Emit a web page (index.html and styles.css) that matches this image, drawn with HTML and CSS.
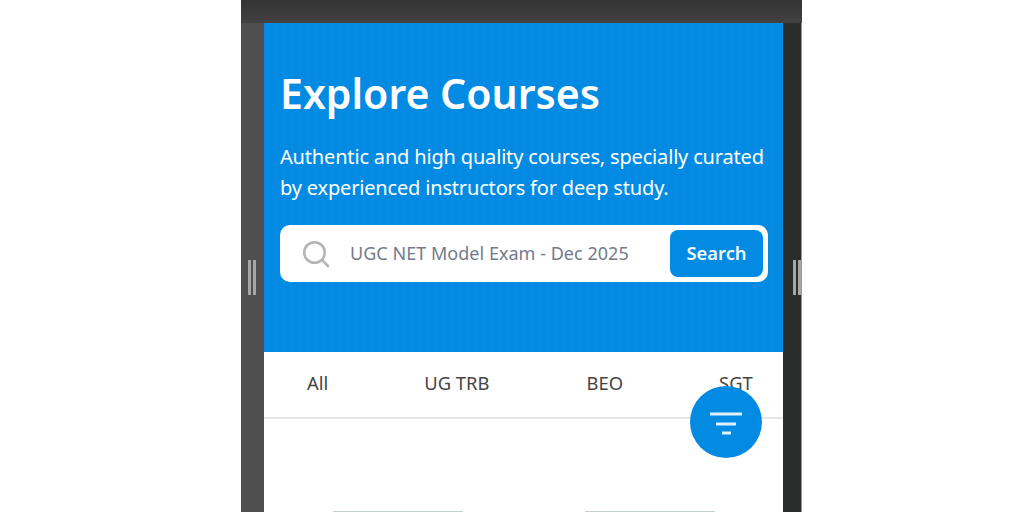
FILE: index.html
```html
<!DOCTYPE html>
<html lang="en">
<head>
  <meta charset="UTF-8">
  <meta name="viewport" content="width=device-width, initial-scale=1.0">
  <title>Explore Courses</title>
  <link rel="stylesheet" href="styles.css">
</head>
<body>
  <div class="device">
    <div class="top-bar"></div>
    <div class="device-body">
      <div class="rail rail-left">
        <div class="handle"></div>
      </div>
      <main class="screen">
        <section class="hero">
          <h1>Explore Courses</h1>
          <p class="subheading">Authentic and high quality courses, specially curated by experienced instructors for deep study.</p>
          <div class="search">
            <svg class="search-icon" width="28" height="28" viewBox="0 0 28 28" fill="none" stroke="#b5b5b5" stroke-width="2.6" stroke-linecap="round">
              <circle cx="12.5" cy="12.5" r="10.3"/>
              <path d="M20.2 20.2L26 26"/>
            </svg>
            <span class="search-text">UGC NET Model Exam - Dec 2025</span>
            <button class="search-btn">Search</button>
          </div>
        </section>
        <nav class="tabs">
          <div class="tab tab-all">All</div>
          <div class="tab tab-ug">UG TRB</div>
          <div class="tab tab-beo">BEO</div>
          <div class="tab tab-sgt">SGT</div>
        </nav>
        <div class="fab">
          <svg width="34" height="26" viewBox="0 0 34 26" fill="none" stroke="#dff1fd" stroke-width="3">
            <path d="M1 5H33"/>
            <path d="M7 15H27"/>
            <path d="M13 24H22"/>
          </svg>
        </div>
        <div class="cards">
          <div class="card"></div>
          <div class="card"></div>
        </div>
      </main>
      <div class="rail rail-right">
        <div class="handle"></div>
      </div>
    </div>
  </div>
</body>
</html>
```

FILE: styles.css
```css
body {
  margin: 0;
  height: 512px;
  overflow: hidden;
  background: #fff;
  font-family: "Noto Sans", "Open Sans", sans-serif;
}
.device {
  width: 561px;
  height: 512px;
  margin-left: 241px;
  display: flex;
  flex-direction: column;
}
.top-bar {
  height: 23px;
  background: linear-gradient(to bottom, #343434, #414141);
}
.device-body {
  flex: 1;
  display: flex;
  min-height: 0;
}
.rail {
  padding-top: 237px;
  box-sizing: border-box;
}
.rail-left {
  width: 23px;
  background: #4f4f4f;
  padding-left: 7px;
}
.rail-right {
  width: 19px;
  background: #2b2d2d;
  padding-left: 10px;
  border-right: 1px solid #9a9a9a;
}
.handle {
  width: 2px;
  height: 35px;
  border-left: 3px solid #a6a6a6;
  border-right: 3px solid #a6a6a6;
}
.screen {
  position: relative;
  flex: 1;
  min-width: 0;
  background: #fff;
  overflow: hidden;
}
.hero {
  height: 329px;
  box-sizing: border-box;
  padding: 42px 15px 0 16px;
  color: #fff;
  background-color: #038be3;
  background-image: radial-gradient(rgba(255, 255, 255, 0.035) 1px, transparent 1px);
  background-size: 8px 8px;
}
h1 {
  margin: 0 0 20px;
  font-size: 41px;
  line-height: 56px;
  font-weight: 600;
}
.subheading {
  margin: 0 0 22px;
  font-size: 20px;
  line-height: 31px;
  letter-spacing: -0.17px;
}
.search {
  display: flex;
  align-items: center;
  height: 57px;
  box-sizing: border-box;
  padding: 5px;
  background: #fff;
  border-radius: 10px;
}
.search-icon {
  margin-left: 17px;
  flex: none;
}
.search-text {
  flex: 1;
  margin-left: 20px;
  padding-bottom: 1px;
  font-size: 18px;
  letter-spacing: 0.03px;
  color: #737b8a;
  white-space: nowrap;
}
.search-btn {
  width: 93px;
  height: 47px;
  padding: 0 0 2px;
  border: 0;
  border-radius: 8px;
  background: #038be3;
  color: #f2f9ff;
  font-family: inherit;
  font-size: 18.4px;
  font-weight: 600;
}
.tabs {
  display: flex;
  height: 67px;
  box-sizing: border-box;
  align-items: center;
  padding-bottom: 5px;
  border-bottom: 2px solid #e6e6e6;
}
.tab {
  font-size: 18.4px;
  color: #454545;
  white-space: nowrap;
}
.tab-all { margin-left: 43px; }
.tab-ug { margin-left: 96px; }
.tab-beo { margin-left: 97px; }
.tab-sgt { margin-left: 96px; }
.fab {
  position: absolute;
  left: 426px;
  top: 363px;
  width: 72px;
  height: 72px;
  border-radius: 50%;
  background: #038be3;
  display: flex;
  align-items: center;
  justify-content: center;
}
.cards {
  display: flex;
  gap: 122px;
  padding: 92px 0 0 69px;
}
.card {
  width: 130px;
  height: 1px;
  background: #c3d3cb;
}
```
